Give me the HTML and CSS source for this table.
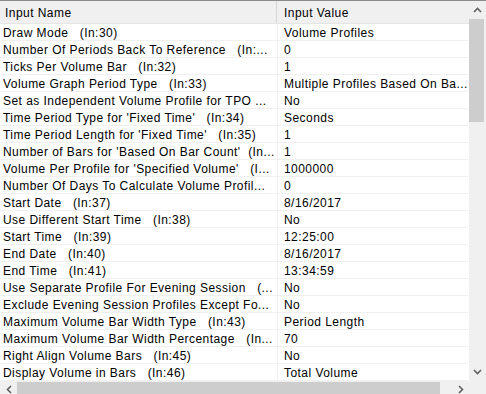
FILE: index.html
```html
<!DOCTYPE html>
<html>
<head>
<meta charset="utf-8">
<link rel="stylesheet" href="styles.css">
</head>
<body>
<div class="frame">
  <div class="main">
    <div class="grid">
      <div class="hdr">
        <div class="hcell c1">Input Name</div>
        <div class="hcell c2">Input Value</div>
      </div>
      <div class="row"><div class="cell c1">Draw Mode   (In:30)</div><div class="cell c2">Volume Profiles</div></div>
      <div class="row"><div class="cell c1">Number Of Periods Back To Reference   (In:...</div><div class="cell c2">0</div></div>
      <div class="row"><div class="cell c1">Ticks Per Volume Bar   (In:32)</div><div class="cell c2">1</div></div>
      <div class="row"><div class="cell c1">Volume Graph Period Type   (In:33)</div><div class="cell c2">Multiple Profiles Based On Ba...</div></div>
      <div class="row"><div class="cell c1">Set as Independent Volume Profile for TPO ...</div><div class="cell c2">No</div></div>
      <div class="row"><div class="cell c1">Time Period Type for 'Fixed Time'   (In:34)</div><div class="cell c2">Seconds</div></div>
      <div class="row"><div class="cell c1">Time Period Length for 'Fixed Time'   (In:35)</div><div class="cell c2">1</div></div>
      <div class="row"><div class="cell c1">Number of Bars for 'Based On Bar Count'  (In...</div><div class="cell c2">1</div></div>
      <div class="row"><div class="cell c1">Volume Per Profile for 'Specified Volume'   (I...</div><div class="cell c2">1000000</div></div>
      <div class="row"><div class="cell c1">Number Of Days To Calculate Volume Profil...</div><div class="cell c2">0</div></div>
      <div class="row"><div class="cell c1">Start Date   (In:37)</div><div class="cell c2">8/16/2017</div></div>
      <div class="row"><div class="cell c1">Use Different Start Time   (In:38)</div><div class="cell c2">No</div></div>
      <div class="row"><div class="cell c1">Start Time   (In:39)</div><div class="cell c2">12:25:00</div></div>
      <div class="row"><div class="cell c1">End Date   (In:40)</div><div class="cell c2">8/16/2017</div></div>
      <div class="row"><div class="cell c1">End Time   (In:41)</div><div class="cell c2">13:34:59</div></div>
      <div class="row"><div class="cell c1">Use Separate Profile For Evening Session   (...</div><div class="cell c2">No</div></div>
      <div class="row"><div class="cell c1">Exclude Evening Session Profiles Except Fo...</div><div class="cell c2">No</div></div>
      <div class="row"><div class="cell c1">Maximum Volume Bar Width Type   (In:43)</div><div class="cell c2">Period Length</div></div>
      <div class="row"><div class="cell c1">Maximum Volume Bar Width Percentage   (In...</div><div class="cell c2">70</div></div>
      <div class="row"><div class="cell c1">Right Align Volume Bars   (In:45)</div><div class="cell c2">No</div></div>
      <div class="row"><div class="cell c1">Display Volume in Bars   (In:46)</div><div class="cell c2">Total Volume</div></div>
    </div>
    <div class="vscroll">
      <div class="arrow"><svg width="9" height="6" viewBox="0 0 9 6"><polyline points="1,5 4.5,1.5 8,5" fill="none" stroke="#606060" stroke-width="1.6"/></svg></div>
      <div class="vthumb"></div>
      <div class="vtrack"></div>
      <div class="arrow"><svg width="9" height="6" viewBox="0 0 9 6"><polyline points="1,1 4.5,4.5 8,1" fill="none" stroke="#606060" stroke-width="1.6"/></svg></div>
    </div>
  </div>
  <div class="bottom">
    <div class="hscroll">
      <div class="harrow"><svg width="6" height="9" viewBox="0 0 6 9"><polyline points="5,1 1.5,4.5 5,8" fill="none" stroke="#606060" stroke-width="1.6"/></svg></div>
      <div class="hthumb"></div>
      <div class="htrack"></div>
      <div class="harrow"><svg width="6" height="9" viewBox="0 0 6 9"><polyline points="1,1 4.5,4.5 1,8" fill="none" stroke="#606060" stroke-width="1.6"/></svg></div>
    </div>
    <div class="corner"></div>
  </div>
</div>
</body>
</html>
```
FILE: styles.css
```css
html, body {
  margin: 0;
  padding: 0;
  background: #ffffff;
}
.frame {
  width: 486px;
  height: 394px;
  overflow: hidden;
  border-top: 1px solid #8c8c8c;
  box-sizing: border-box;
  font-family: "Liberation Sans", Arial, sans-serif;
  font-size: 12px;
  letter-spacing: 0.45px;
  color: #000000;
  display: flex;
  flex-direction: column;
}
.main {
  display: flex;
  height: 380px;
  flex: none;
}
.grid {
  width: 469px;
  flex: none;
  overflow: hidden;
}
.hdr {
  display: flex;
  height: 22px;
  background: #f0f0f0;
  border-bottom: 1px solid #e5e5e5;
}
.hcell {
  white-space: pre;
  line-height: 24px;
  height: 22px;
  overflow-x: clip;
  overflow-y: visible;
}
.hcell.c1 {
  width: 277px;
  padding-left: 5px;
  box-sizing: border-box;
  border-right: 1px solid #d5d5d5;
}
.hcell.c2 {
  padding-left: 7px;
  flex: 1;
}
.row {
  display: flex;
  height: 17px;
  box-sizing: border-box;
  border-bottom: 1px solid #f0f0f0;
  width: 468px;
}
.cell {
  white-space: pre;
  overflow-x: clip;
  overflow-y: visible;
  line-height: 19px;
  height: 16px;
}
.cell.c1 {
  width: 278px;
  padding-left: 3px;
  box-sizing: border-box;
  border-right: 1px solid #f0f0f0;
}
.cell.c2 {
  flex: 1;
  padding-left: 6px;
}
.vscroll {
  width: 17px;
  flex: none;
  background: #f0f0f0;
  display: flex;
  flex-direction: column;
}
.arrow {
  height: 18px;
  display: flex;
  align-items: center;
  justify-content: center;
  flex: none;
  padding-right: 1px;
}
.vthumb {
  height: 103px;
  margin-right: 2px;
  background: #cdcdcd;
  flex: none;
}
.vtrack {
  flex: 1;
}
.bottom {
  display: flex;
  height: 17px;
  flex: none;
}
.hscroll {
  width: 469px;
  background: #f0f0f0;
  display: flex;
  flex: none;
}
.harrow {
  width: 17px;
  display: flex;
  align-items: center;
  justify-content: center;
  flex: none;
}
.hthumb {
  width: 423px;
  background: #cdcdcd;
  margin-top: 1px;
  flex: none;
}
.htrack {
  flex: 1;
}
.corner {
  flex: 1;
  background: #f0f0f0;
}
```
